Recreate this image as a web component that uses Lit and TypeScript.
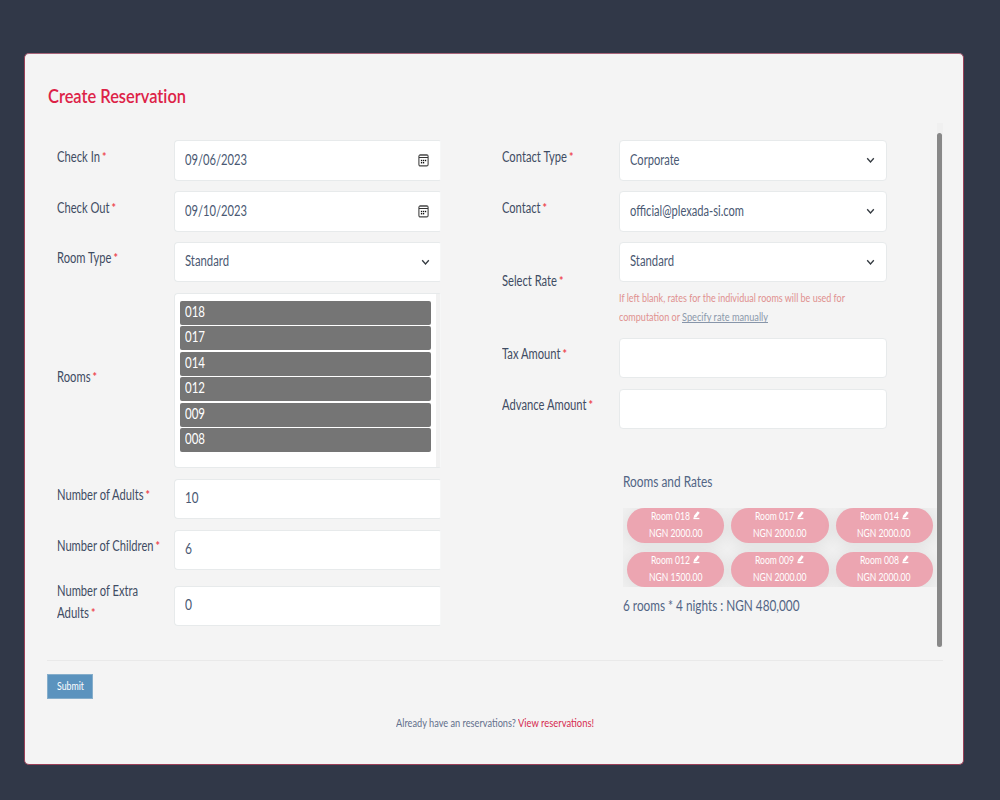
import { LitElement, html, css, svg, nothing } from "lit";
import { customElement, property } from "lit/decorators.js";

/* Text condensed horizontally so that it takes exactly `w` pixels. */
@customElement("fit-text")
class FitText extends LitElement {
  @property({ type: Number }) w = 0;
  @property() text = "";
  static styles = css`
    :host { display: inline-block; white-space: nowrap; flex: none; }
    .t { display: inline-block; transform-origin: 0 50%; }
  `;
  render() {
    return html`<span class="t">${this.text}</span>`;
  }
  updated() {
    const t = this.renderRoot.querySelector(".t") as HTMLElement;
    const natural = t.getBoundingClientRect().width;
    if (!natural) return;
    t.style.transform = `scaleX(${this.w / natural})`;
    t.style.marginRight = `${this.w - natural}px`;
  }
}

const fit = (text: string, w: number, cls = "") =>
  html`<fit-text class=${cls} .text=${text} .w=${w}></fit-text>`;

const chevron = svg`<svg class="chev" width="9" height="7" viewBox="0 0 9 7"><path d="M1.2 1.2 4.5 4.9 7.8 1.2" fill="none" stroke="#343a40" stroke-width="1.3"/></svg>`;

const calendar = svg`<svg class="cal" width="11" height="13" viewBox="0 0 11 13">
  <rect x=".9" y=".9" width="9.2" height="11" rx="1.4" fill="none" stroke="#444" stroke-width="1.1"/>
  <path d="M1 3.5H10" stroke="#333" stroke-width="1"/>
  <path d="M1.4 1.4H9.6" stroke="#666" stroke-width=".8"/>
  <g fill="#111"><rect x="2.9" y="5.8" width="1.3" height="1.4"/><rect x="4.9" y="5.8" width="1.3" height="1.4"/><rect x="6.9" y="5.8" width="1.3" height="1.4"/><rect x="2.9" y="8" width="1.3" height="1.4"/><rect x="4.9" y="8" width="1.3" height="1.4"/></g>
</svg>`;

const pen = svg`<svg class="pen" width="7" height="9" viewBox="0 0 7 9"><path d="M4.7.3 6.7 1.8 3.4 6.2 .6 6.9 1.2 4.4Z" fill="#fff"/><path d="M.4 7.5H6.4" stroke="#fff" stroke-width="1.3"/></svg>`;

type Line = [string, number];
interface Row {
  label: Line[];
  value?: Line;
  kind?: "date" | "select" | "list" | "input";
  size: string;
  help?: boolean;
}

const LEFT: Row[] = [
  { label: [["Check In", 43]], value: ["09/06/2023", 62], kind: "date", size: "h41 g10" },
  { label: [["Check Out", 52.5]], value: ["09/10/2023", 62], kind: "date", size: "h41 g10" },
  { label: [["Room Type", 54.5]], value: ["Standard", 44], kind: "select", size: "h40 g11" },
  { label: [["Rooms", 33.5]], kind: "list", size: "h175 g11" },
  { label: [["Number of Adults", 86.5]], value: ["10", 13.5], size: "h40 g11" },
  { label: [["Number of Children", 96.5]], value: ["6", 7], size: "h40 g16" },
  { label: [["Number of Extra", 81], ["Adults", 32]], value: ["0", 7], size: "h40" },
];
const RIGHT: Row[] = [
  { label: [["Contact Type", 65]], value: ["Corporate", 49.5], kind: "select", size: "h41 g10" },
  { label: [["Contact", 38.5]], value: ["official@plexada-si.com", 114], kind: "select", size: "h41 g10" },
  { label: [["Select Rate", 55]], value: ["Standard", 44], kind: "select", size: "h40 tall g12", help: true },
  { label: [["Tax Amount", 58.5]], size: "h40 g11" },
  { label: [["Advance Amount", 84.5]], size: "h40" },
];
const ROOMS = ["018", "017", "014", "012", "009", "008"];

@customElement("app-root")
class AppRoot extends LitElement {
  static styles = css`
    :host { display: block; height: 800px; background: #313848; font-family: Lato, Carlito, sans-serif; font-size: 14.6px; color: #4a5973; box-sizing: border-box; padding: 53px 36px 0 24px; overflow: hidden; }
    * { box-sizing: border-box; }
    .card { height: 712px; background: #f4f4f4; border: 1px solid #9a4058; border-top-color: #a8657a; border-radius: 5px; padding: 31px 20px 0 22px; }
    .title { display: block; margin-left: 1px; height: 22px; font-size: 19px; line-height: 22px; font-weight: 600; color: #dd2247; font-variant-ligatures: none; }
    .scroll { display: flex; height: 524px; margin-top: 16px; }
    .col { padding-top: 17px; }
    .left { width: 394px; padding-left: 10px; }
    .right { width: 496px; padding-left: 61px; }
    .row { display: flex; }
    .g10 { margin-bottom: 10px; } .g11 { margin-bottom: 11px; } .g12 { margin-bottom: 12px; } .g16 { margin-bottom: 16px; }
    .label { width: 117px; display: flex; flex-direction: column; justify-content: center; padding-bottom: 9px; line-height: 22px; color: #3f4c63; }
    .h41 .label, .h175 .label, .tall .label { padding-bottom: 7px; }
    .label.two { margin: -10px 0; }
    .line { display: flex; }
    .star { color: #ee4450; font-size: 10.5px; font-weight: 700; margin-left: 2px; line-height: 23px; height: 22px; }
    .field { width: 268px; display: flex; align-items: center; justify-content: space-between; background: #fff; border: 1px solid #e7eaeb; border-radius: 4px; padding: 0 11px 2px 10px; }
    .left .field { width: 267px; border-right-color: #f6f7f7; border-top-right-radius: 2px; border-bottom-right-radius: 2px; }
    .h41 .field { height: 41px; } .h40 .field { height: 40px; padding-bottom: 3px; } .h175 .field { height: 175px; }
    .cal { margin: 2px 0 0 0; }
    .chev { margin: 3px 0 0 0; }
    .h41 .chev { margin-top: 2px; }
    .h40 .chev { margin-top: 4px; }
    .left .chev { margin-right: -1px; }
    .row .field.list { padding: 7px 0 0 5px; align-items: flex-start; }
    .opts { width: 251px; display: grid; gap: 1.8px; }
    .opt { height: 23.7px; background: #757575; border-radius: 2px; color: #fff; padding-left: 5px; line-height: 22px; }
    .track { width: 4px; height: 173px; margin-top: -7px; background: #f1f1f1; }
    .help { height: 44px; padding-top: 6px; font-size: 11px; line-height: 19px; color: #e0908f; }
    .help .link { color: #8b99ab; border-bottom: 1px solid #8795a9; height: 14px; line-height: 15px; margin: 2px 0 0 2px; }
    .rates { margin: 42px 0 0 121px; color: #526585; }
    .rates .h { display: block; height: 22px; line-height: 22px; }
    .grid { margin-top: 15px; width: 314px; height: 79px; padding-left: 4px; display: grid; grid-template-columns: 97.3px 97.3px 97.3px; grid-template-rows: 35px 35px; gap: 9px 7px; overflow: hidden; background: #f0f0f0; }
    .pill { background: #eca5b1; border-radius: 17.5px; box-shadow: 0 2px 14px 2px rgba(0, 0, 0, .06); color: #fff; font-size: 10.7px; line-height: 17px; text-align: center; }
    .pill .r { display: flex; justify-content: center; align-items: center; gap: 3px; height: 17px; margin-top: -1px; }
    .pill .r2 { display: flex; justify-content: center; height: 18px; }
    .total { display: block; margin-top: 7px; font-size: 15px; line-height: 22px; }
    .bar { width: 6px; height: 524px; background: #f0f0f0; padding-top: 10px; }
    .thumb { height: 514px; width: 5px; background: #888; border-radius: 3px; }
    .hr { height: 1px; background: #e9e9e9; margin: 13px 0; width: 896px; }
    .btn { display: block; width: 46px; height: 25px; border: 1px solid #86aecb; background: #5b93be; color: #fff; font: 11px/21px Lato, sans-serif; padding: 0 0 3px 9px; text-align: left; }
    .foot { display: flex; justify-content: center; gap: 2px; margin: 14px 1px 0 0; font-size: 11px; line-height: 20px; color: #63708c; }
    .foot .view { color: #d62c50; }
  `;

  row(r: Row) {
    const last = r.label.length - 1;
    const field =
      r.kind === "list"
        ? html`<div class="field list"><div class="opts">${ROOMS.map((n) => html`<div class="opt">${fit(n, 20)}</div>`)}</div><div class="track"></div></div>`
        : html`<div class="field">${r.value ? fit(r.value[0], r.value[1]) : nothing}${r.kind === "select" ? chevron : r.kind === "date" ? calendar : nothing}</div>`;
    return html`<div class="row ${r.size}">
      <div class="label ${last ? "two" : ""}">${r.label.map((l, i) => html`<div class="line">${fit(l[0], l[1])}${i === last ? html`<span class="star">*</span>` : nothing}</div>`)}</div>
      <div>${field}${r.help
        ? html`<div class="help"><div class="line">${fit("If left blank, rates for the individual rooms will be used for", 226)}</div><div class="line">${fit("computation or", 61)}${fit("Specify rate manually", 86, "link")}</div></div>`
        : nothing}</div>
    </div>`;
  }

  render() {
    return html`<div class="card">
      ${fit("Create Reservation", 138, "title")}
      <div class="scroll">
        <div class="col left">${LEFT.map((r) => this.row(r))}</div>
        <div class="col right">
          ${RIGHT.map((r) => this.row(r))}
          <div class="rates">
            ${fit("Rooms and Rates", 89.5, "h")}
            <div class="grid">${ROOMS.map((n) => html`<div class="pill"><div class="r">${fit("Room " + n, 39)}${pen}</div><div class="r2">${fit(n === "012" ? "NGN 1500.00" : "NGN 2000.00", 53.5)}</div></div>`)}</div>
            ${fit("6 rooms * 4 nights : NGN 480,000", 176.5, "total")}
          </div>
        </div>
        <div class="bar"><div class="thumb"></div></div>
      </div>
      <div class="hr"></div>
      <button class="btn">${fit("Submit", 27)}</button>
      <div class="foot">${fit("Already have an reservations?", 120)}${fit("View reservations!", 76, "view")}</div>
    </div>`;
  }
}
